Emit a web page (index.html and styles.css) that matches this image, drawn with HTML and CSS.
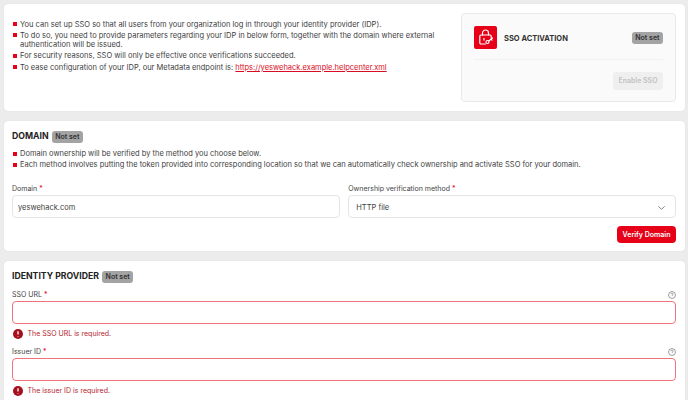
FILE: index.html
```html
<!DOCTYPE html>
<html lang="en">
<head>
<meta charset="utf-8">
<title>SSO</title>
<link rel="stylesheet" href="styles.css">
</head>
<body>
<div class="page">
  <section class="card intro">
    <ul class="bullets intro-list">
      <li>You can set up SSO so that all users from your organization log in through your identity provider (IDP).</li>
      <li>To do so, you need to provide parameters regarding your IDP in below form, together with the domain where external authentication will be issued.</li>
      <li>For security reasons, SSO will only be effective once verifications succeeded.</li>
      <li>To ease configuration of your IDP, our Metadata endpoint is: <a href="#">https://yeswehack.example.helpcenter.xml</a></li>
    </ul>
    <div class="activation">
      <div class="activation-head">
        <span class="logo">
          <svg width="16" height="17" viewBox="0 0 16 17" fill="none" stroke="#fff" stroke-width="1.2" stroke-linecap="round" stroke-linejoin="round">
            <path d="M4.5 6V4a3 3 0 0 1 6 0v2"/>
            <path d="M7.5 15H3a1.2 1.2 0 0 1-1.2-1.2V7.2A1.2 1.2 0 0 1 3 6h9a1.2 1.2 0 0 1 1.2 1.2V9"/>
            <circle cx="9.5" cy="13" r="1.5"/>
            <path d="M10.7 11.9 14.5 9M13 10.2l1 1"/>
            <path d="M6 9.5v1.6"/>
          </svg>
        </span>
        <span class="activation-title">SSO ACTIVATION</span>
        <span class="badge">Not set</span>
      </div>
      <div class="activation-foot">
        <button class="btn-disabled" type="button">Enable SSO</button>
      </div>
    </div>
  </section>

  <section class="card domain">
    <h2 class="heading">DOMAIN <span class="badge">Not set</span></h2>
    <ul class="bullets">
      <li>Domain ownership will be verified by the method you choose below.</li>
      <li>Each method involves putting the token provided into corresponding location so that we can automatically check ownership and activate SSO for your domain.</li>
    </ul>
    <div class="form-row">
      <div class="field">
        <label class="label">Domain <em>*</em></label>
        <div class="input">yeswehack.com</div>
      </div>
      <div class="field">
        <label class="label">Ownership verification method <em>*</em></label>
        <div class="input select">HTTP file
          <svg width="7" height="4" viewBox="0 0 7 4" fill="none" stroke="#777" stroke-width=".9" stroke-linecap="round" stroke-linejoin="round"><path d="M.6.6 3.5 3.3 6.4.6"/></svg>
        </div>
      </div>
    </div>
    <div class="actions"><button class="btn-primary" type="button">Verify Domain</button></div>
  </section>

  <section class="card provider">
    <h2 class="heading">IDENTITY PROVIDER <span class="badge">Not set</span></h2>
    <div class="field-block">
      <div class="label-row">
        <label class="label">SSO URL <em>*</em></label>
        <svg class="help" width="8" height="8" viewBox="0 0 9 9" fill="none" stroke="#777" stroke-width=".8"><circle cx="4.5" cy="4.5" r="3.9"/><path d="M3.3 3.6a1.2 1.2 0 1 1 1.7 1.1c-.4.2-.5.4-.5.8M4.5 6.6v.2"/></svg>
      </div>
      <div class="input invalid"></div>
      <p class="error"><svg width="10" height="10" viewBox="0 0 10 10"><circle cx="5" cy="5" r="5" fill="#a5101f"/><path d="M5 2.2v3.2M5 7v.6" stroke="#fff" stroke-width="1.3"/></svg>The SSO URL is required.</p>
    </div>
    <div class="field-block">
      <div class="label-row">
        <label class="label">Issuer ID <em>*</em></label>
        <svg class="help" width="8" height="8" viewBox="0 0 9 9" fill="none" stroke="#777" stroke-width=".8"><circle cx="4.5" cy="4.5" r="3.9"/><path d="M3.3 3.6a1.2 1.2 0 1 1 1.7 1.1c-.4.2-.5.4-.5.8M4.5 6.6v.2"/></svg>
      </div>
      <div class="input invalid"></div>
      <p class="error"><svg width="10" height="10" viewBox="0 0 10 10"><circle cx="5" cy="5" r="5" fill="#a5101f"/><path d="M5 2.2v3.2M5 7v.6" stroke="#fff" stroke-width="1.3"/></svg>The issuer ID is required.</p>
    </div>
  </section>
</div>
</body>
</html>
```
FILE: styles.css
```css
* { box-sizing: border-box; }
html, body { margin: 0; height: 400px; overflow: hidden; }
body { background: #ececec; font-family: Inter, "Liberation Sans", sans-serif; font-size: 7.5px; color: #404040; }
.page { padding: 4px 3px 0 4px; display: flex; flex-direction: column; gap: 10px; }
.card { background: #fff; border-radius: 4px; box-shadow: 0 0 1px rgba(0,0,0,.15); }
.intro { height: 107px; display: flex; gap: 12px; padding: 9px; }
.bullets { list-style: none; margin: 0; padding: 0; line-height: 9.3px; }
.bullets li { position: relative; padding-left: 7px; margin-bottom: 2px; }
.bullets li::before { content: ""; position: absolute; left: 0; top: 2.5px; width: 4px; height: 4px; background: #e60018; }
.intro-list { flex: 1; padding-top: 6.5px; }
.bullets a { color: #d80d24; }
.activation { width: 215px; background: #fafafa; border: 1px solid #e8e8e8; border-radius: 4px; padding: 12px; flex: none; }
.activation-head { display: flex; align-items: center; padding-bottom: 10px; border-bottom: 1px solid #f1f1f1; }
.logo { width: 23px; height: 23px; background: #e60018; border-radius: 2px; display: flex; align-items: center; justify-content: center; }
.activation-title { margin-left: 7px; font-weight: 700; color: #333; flex: 1; padding-top: 1px; }
.badge { display: inline-block; background: #a3a3a3; color: #333; font-weight: 600; font-size: 7px; line-height: 12px; padding: 0 3.5px; border-radius: 3px; margin-left: 1px; }
.activation-foot { display: flex; justify-content: flex-end; padding-top: 12px; }
.btn-disabled { border: 0; background: #efefef; color: #c2c2c2; font: 600 7px Inter, sans-serif; height: 17.5px; width: 50px; border-radius: 3px; padding: 0; }
.domain { height: 130px; padding: 8px 9px 8px 8px; }
.heading { margin: 0; font-size: 8.7px; line-height: 14px; font-weight: 700; color: #222; }
.domain .bullets { margin-top: 6px; }
.domain .bullets li { margin-left: 1px; }
.form-row { display: grid; grid-template-columns: 1fr 1fr; gap: 8.5px; margin-top: 13.4px; }
.label { display: block; line-height: 12px; font-size: 7px; color: #444; }
.label em { color: #e60018; font-style: normal; }
.input { height: 22.5px; margin-top: .3px; border: 1px solid #e5e5e5; border-radius: 4px; padding: 2px 5px 0; line-height: 19px; background: #fff; font-size: 7.5px; }
.select { display: flex; align-items: center; justify-content: space-between; padding: 2px 10px 0 7px; }
.actions { display: flex; justify-content: flex-end; margin-top: 8.5px; }
.btn-primary { border: 0; background: #e60018; color: #fff; font: 600 7px Inter, sans-serif; height: 17px; width: 59px; border-radius: 4px; padding: 0; }
.provider { height: 150px; padding: 8px 9px 8px 8px; }
.field-block { margin-top: 7px; }
.heading + .field-block { margin-top: 6px; }
.label-row { display: flex; justify-content: space-between; align-items: center; }
.invalid { border-color: #f0727d; }
.error { display: flex; align-items: center; gap: 4.5px; margin: 5.3px 0 0; color: #b51c2c; font-size: 7px; line-height: 10px; padding-left: 1px; }
```
